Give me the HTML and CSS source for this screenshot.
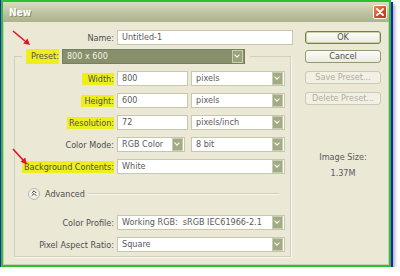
FILE: index.html
```html
<!DOCTYPE html>
<html lang="en">
  <head>
    <meta charset="UTF-8" />
    <meta name="viewport" content="width=device-width, initial-scale=1.0" />
    <title>New</title>
    <link rel="stylesheet" href="styles.css">
  </head>
  <body>
    <div class="frame">
      <div class="titlebar">
        <span class="title">New</span>
        <span class="close-btn">
          <svg width="12" height="12" viewBox="0 0 12 12">
            <path d="M3 3l6 6M9 3l-6 6" stroke="#fff" stroke-width="1.8" stroke-linecap="round" />
          </svg>
        </span>
      </div>

      <div class="dialog">
        <div class="form">
          <div class="name-row">
            <span class="label">Name:</span>
            <div class="input">Untitled-1</div>
          </div>

          <fieldset class="group">
            <legend class="group-head">
              <span class="hl hl-preset">Preset:</span>
              <div class="select preset-select">
                <span class="value">800 x 600</span>
                <span class="arrow"></span>
              </div>
            </legend>

            <div class="rows">
              <div class="row">
                <span class="label"><span class="hl hl-width">Width:</span></span>
                <div class="pair">
                  <div class="input">800</div>
                  <div class="select unit"><span class="value">pixels</span><span class="arrow"></span></div>
                </div>
              </div>
              <div class="row">
                <span class="label"><span class="hl hl-height">Height:</span></span>
                <div class="pair">
                  <div class="input">600</div>
                  <div class="select unit"><span class="value">pixels</span><span class="arrow"></span></div>
                </div>
              </div>
              <div class="row">
                <span class="label"><span class="hl">Resolution:</span></span>
                <div class="pair">
                  <div class="input">72</div>
                  <div class="select unit"><span class="value">pixels/inch</span><span class="arrow"></span></div>
                </div>
              </div>
              <div class="row">
                <span class="label">Color Mode:</span>
                <div class="pair pair-wide">
                  <div class="select"><span class="value">RGB Color</span><span class="arrow"></span></div>
                  <div class="select unit"><span class="value">8 bit</span><span class="arrow"></span></div>
                </div>
              </div>
              <div class="row">
                <span class="label"><span class="hl">Background Contents:</span></span>
                <div class="select"><span class="value">White</span><span class="arrow"></span></div>
              </div>

              <div class="advanced">
                <span class="adv-btn">
                  <svg width="11" height="11" viewBox="0 0 11 11">
                    <path d="M3 5l2.5-2.5L8 5M3 8l2.5-2.5L8 8" stroke="#333" stroke-width="1.1" fill="none" />
                  </svg>
                </span>
                <span class="adv-text">Advanced</span>
                <span class="adv-line"></span>
              </div>

              <div class="row">
                <span class="label">Color Profile:</span>
                <div class="select"><span class="value">Working RGB:&nbsp; sRGB IEC61966-2.1</span><span class="arrow"></span></div>
              </div>
              <div class="row">
                <span class="label">Pixel Aspect Ratio:</span>
                <div class="select"><span class="value">Square</span><span class="arrow"></span></div>
              </div>
            </div>
          </fieldset>
        </div>

        <div class="side">
          <button class="btn btn-ok">OK</button>
          <button class="btn btn-cancel">Cancel</button>
          <button class="btn btn-save" disabled>Save Preset...</button>
          <button class="btn btn-delete" disabled>Delete Preset...</button>
          <div class="size-label">Image Size:</div>
          <div class="size-value">1.37M</div>
        </div>
      </div>
    </div>

    <!-- red pointer arrows drawn over the dialog -->
    <svg class="arrows" width="400" height="276" viewBox="0 0 400 276">
      <line x1="13" y1="31" x2="25" y2="41" stroke="#e3141b" stroke-width="1.6" />
      <polygon points="30,45 23.2,43.6 27.4,38.6" fill="#e3141b" />
      <line x1="13" y1="149" x2="23" y2="160" stroke="#e3141b" stroke-width="1.6" />
      <polygon points="27,164.5 20.5,161.8 25.2,157.4" fill="#e3141b" />
    </svg>
  </body>
</html>
```

FILE: styles.css
```css
body {
  margin: 0;
  background: #fff;
  font-family: "DejaVu Sans Condensed", "Liberation Sans", sans-serif;
  font-size: 9px;
  color: #4e4e4e;
}

.frame {
  box-sizing: border-box;
  width: 390px;
  height: 267px;
  margin-left: 1px;
  border: 2px solid #27c42c;
  box-shadow: -1px 0 0 #1d1dcc, 2px 2px 0 #1d1dcc, 4px 4px 3px rgba(0, 0, 0, 0.3);
  display: flex;
  flex-direction: column;
  background: #ebe8d6;
}

.titlebar {
  height: 20px;
  display: flex;
  align-items: center;
  justify-content: space-between;
  padding: 0 2px 0 6px;
  background: linear-gradient(#dadcc4, #c0c5a2 50%, #acb28b);
}

.title {
  color: #fff;
  font-weight: bold;
  font-size: 10px;
  text-shadow: 1px 1px 0 #8a8f6a;
}

.close-btn {
  box-sizing: border-box;
  width: 14px;
  height: 14px;
  border: 1px solid #fff;
  border-radius: 2px;
  background: linear-gradient(135deg, #e98a62, #cf4a22 60%, #b93614);
  display: flex;
  align-items: center;
  justify-content: center;
}

.dialog {
  flex: 1;
  display: flex;
  padding: 8px 0 0 10px;
  border: 1px solid #cdc9b3;
  border-top: 0;
}

.form {
  width: 279px;
}

.name-row {
  display: grid;
  grid-template-columns: 100px 176px;
  column-gap: 3px;
  align-items: center;
  height: 15px;
}

.label {
  text-align: right;
  white-space: nowrap;
}

.hl {
  background: #eeee1e;
  padding: 1px 0 1px 2px;
}

.hl-preset {
  padding-left: 5px;
}

.hl-width {
  padding-left: 6px;
}

.hl-height {
  padding-left: 3px;
}

.input,
.select {
  box-sizing: border-box;
  height: 15px;
  background: #fff;
  border: 1px solid #c6c8ad;
  color: #5a5a5a;
  padding-left: 4px;
  line-height: 13px;
  white-space: nowrap;
  overflow: hidden;
}

.select {
  display: flex;
  justify-content: space-between;
  padding-right: 1px;
}

.arrow {
  position: relative;
  flex: none;
  box-sizing: border-box;
  width: 11px;
  height: 13px;
  background: #a3ab84;
  border: 1px solid #c6ccb0;
}

.arrow::after {
  content: "";
  position: absolute;
  left: 2px;
  top: 2px;
  width: 3px;
  height: 3px;
  border-right: 1.5px solid #fff;
  border-bottom: 1.5px solid #fff;
  transform: rotate(45deg);
}

.group {
  box-sizing: border-box;
  width: 277px;
  margin: 4px 0 0 0;
  padding: 0 0 4px 0;
  border: 1px solid #d2cfbb;
  box-shadow: 1px 1px 0 #f8f7ef;
  min-width: 0;
}

.group-head {
  display: flex;
  align-items: center;
  margin-left: 7px;
  padding: 0 5px 0 4px;
}

.group-head .hl {
  line-height: 13px;
}

.preset-select {
  width: 183px;
  margin-left: 3px;
  background: #878f6c;
  border-color: #777f5e;
  color: #f2f3e6;
}

.preset-select .arrow {
  background: #99a279;
  border-color: #c7ceb0;
}

.rows {
  padding-top: 7px;
}

.row {
  display: grid;
  grid-template-columns: 99px 168px;
  column-gap: 3px;
  align-items: center;
  height: 15px;
  margin-bottom: 7px;
}

.row:last-child {
  margin-bottom: 0;
}

.pair {
  display: grid;
  grid-template-columns: 71px 94px;
  column-gap: 3px;
}

.pair-wide {
  grid-template-columns: 68px 94px;
  column-gap: 6px;
}

.advanced {
  display: flex;
  align-items: center;
  height: 13px;
  margin: 13px 11px 15px 13px;
}

.adv-btn {
  box-sizing: border-box;
  width: 12px;
  height: 12px;
  border: 1px solid #b9b7a6;
  border-radius: 50%;
  background: radial-gradient(circle at 40% 35%, #fff, #e6e4d8);
  display: flex;
  align-items: center;
  justify-content: center;
}

.adv-text {
  margin-left: 5px;
}

.adv-line {
  flex: 1;
  margin-left: 3px;
  border-top: 1px solid #d2cfbb;
  border-bottom: 1px solid #f8f7ef;
}

.side {
  width: 76px;
  margin-left: 12px;
  display: flex;
  flex-direction: column;
}

.btn {
  box-sizing: border-box;
  height: 13px;
  padding: 0;
  font-family: inherit;
  font-size: 9px;
  line-height: 11px;
  color: #4e4e4e;
  background: linear-gradient(#fdfdf8, #ecebdf);
  border: 1px solid #8f9a70;
  border-radius: 3px;
}

.btn-ok {
  margin-top: 1px;
  border-color: #71804c;
  box-shadow: inset 0 0 0 1px #c9d2a8;
}

.btn-cancel {
  margin-top: 6px;
}

.btn-save {
  margin-top: 8px;
}

.btn-delete {
  margin-top: 8px;
}

.btn:disabled {
  color: #b1ae9d;
  border-color: #cbc8b5;
  background: #f2f0e4;
}

.size-label,
.size-value {
  text-align: center;
  color: #5a5a5a;
  line-height: 11px;
}

.size-label {
  margin-top: 47px;
}

.size-value {
  margin-top: 5px;
}

.arrows {
  position: absolute;
  left: 0;
  top: 0;
  pointer-events: none;
}
```
